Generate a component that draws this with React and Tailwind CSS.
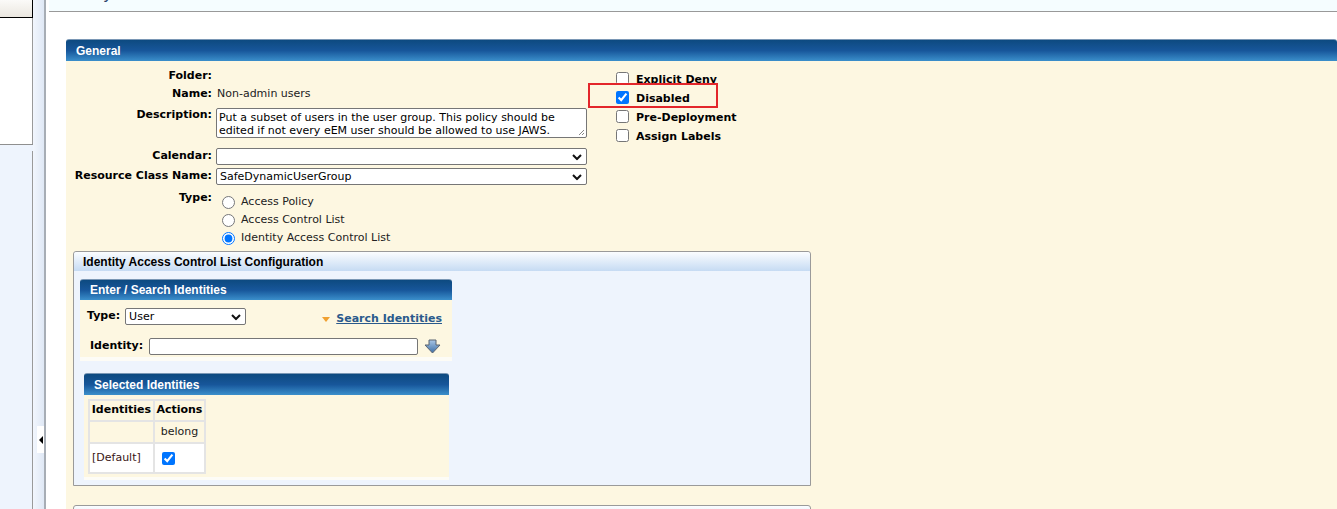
import React from 'react';

const verdana = { fontFamily: '"DejaVu Sans", Verdana, sans-serif' };

const Chevron = () => (
  <svg width="10" height="7" viewBox="0 0 10 7" className="pointer-events-none absolute right-[4px] top-1/2 -translate-y-1/2">
    <path d="M1 1.5 L5 5.5 L9 1.5" fill="none" stroke="#111" strokeWidth="2" />
  </svg>
);

const Select = ({ value, className }) => (
  <div className={`relative h-[17px] shrink-0 rounded-[2px] border border-[#767676] bg-white ${className}`}>
    <span className="block pl-[3px] text-[11px] leading-[15px] text-black">{value}</span>
    <Chevron />
  </div>
);

const BlueHeader = ({ title, className = '' }) => (
  <div className={`flex shrink-0 items-center rounded-tl-[3px] rounded-tr-[3px] border-t border-[#7a97b5] bg-gradient-to-b from-[#0d4a80] via-[#17569a] to-[#3b8fcb] ${className}`}>
    <span className="font-['Liberation_Sans',Arial,sans-serif] text-[12px] font-bold text-white">{title}</span>
  </div>
);

const Label = ({ children, className = '' }) => (
  <div className={`w-[138px] shrink-0 text-right text-[11px] font-bold text-black ${className}`}>{children}</div>
);

const SearchArrow = () => (
  <svg width="17" height="15" viewBox="0 0 17 15">
    <defs>
      <linearGradient id="ag" x1="0" y1="0" x2="0" y2="1">
        <stop offset="0" stopColor="#a9c6e6" />
        <stop offset="1" stopColor="#3d6fa6" />
      </linearGradient>
    </defs>
    <path d="M5 1 H12 V6 H16 L8.5 14 L1 6 H5 Z" fill="url(#ag)" stroke="#5b6470" strokeWidth="1" />
  </svg>
);

export default function App() {
  return (
    <div className="flex h-[509px] w-[1337px] overflow-hidden bg-white" style={verdana}>
      {/* left navigation */}
      <div className="flex w-[33px] shrink-0 flex-col">
        <div className="h-[18px] shrink-0 border-b border-r border-black bg-gradient-to-b from-[#fbfaf8] to-[#ebe7e0]" />
        <div className="h-[126px] shrink-0 border-r border-[#9a9a9a] bg-white" />
        <div className="h-px shrink-0 bg-[#8f8f8f]" />
        <div className="flex flex-1 bg-[#eef4fd]">
          <div className="flex-1" />
          <div className="mt-[6px] w-px bg-[#9a9a9a]" />
        </div>
      </div>

      {/* splitter */}
      <div className="flex w-[13px] shrink-0 flex-col border-r-2 border-[#a7adb5] bg-gradient-to-r from-[#f2f6fd] to-[#dfe8f5]">
        <div className="mt-[426px] ml-[4px] flex h-[27px] w-[7px] items-center justify-center bg-white">
          <div className="h-0 w-0 border-y-[4px] border-r-[4px] border-y-transparent border-r-black" />
        </div>
      </div>

      {/* main */}
      <div className="flex min-w-0 flex-1 flex-col overflow-hidden">
        <div className="ml-[3px] h-[12px] shrink-0 overflow-hidden border-b border-[#999] bg-[#f5fdff]">
          <div className="-mt-[15px] ml-[20px] font-['Liberation_Sans',Arial,sans-serif] text-[16px] leading-[18px] text-[#27406a]">Policy</div>
        </div>

        <div className="ml-[20px] mt-[27px] flex shrink-0 flex-col">
          <BlueHeader title="General" className="h-[22px] pl-[10px]" />

          <div className="flex h-[500px] shrink-0 flex-col bg-[#fdf7e1]">
            <div className="flex shrink-0">
              {/* form */}
              <div className="flex w-[521px] flex-col pl-[8px] pt-[6px]">
                <div className="flex h-[18px] items-center">
                  <Label>Folder:</Label>
                </div>
                <div className="flex h-[19px] items-center gap-[5px]">
                  <Label>Name:</Label>
                  <span className="text-[11px] text-[#222]">Non-admin users</span>
                </div>
                <div className="mt-[4px] flex gap-[4px]">
                  <Label className="leading-[13px]">Description:</Label>
                  <div className="relative h-[30px] w-[371px] rounded-[2px] border border-[#767676] bg-white pl-[2px] text-[11px] leading-[13px] text-black">
                    <div className="whitespace-nowrap pt-[2px]">Put a subset of users in the user group. This policy should be</div>
                    <div className="whitespace-nowrap">edited if not every eEM user should be allowed to use JAWS.</div>
                    <svg width="7" height="7" viewBox="0 0 7 7" className="absolute bottom-[1px] right-[1px]">
                      <path d="M6 1 L1 6 M6 4 L4 6" stroke="#888" strokeWidth="1" />
                    </svg>
                  </div>
                </div>
                <div className="mt-[10px] flex items-center gap-[4px]">
                  <Label>Calendar:</Label>
                  <Select value="" className="w-[371px]" />
                </div>
                <div className="mt-[3px] flex items-center gap-[4px]">
                  <Label>Resource Class Name:</Label>
                  <Select value="SafeDynamicUserGroup" className="w-[371px]" />
                </div>
                <div className="mt-[6px] flex gap-[4px]">
                  <Label className="leading-[13px]">Type:</Label>
                  <div className="flex flex-col pt-[2px]">
                    {[
                      ['Access Policy', false],
                      ['Access Control List', false],
                      ['Identity Access Control List', true],
                    ].map(([t, on]) => (
                      <label key={t} className="flex h-[18px] items-center gap-[6px] text-[11px] text-[#222]">
                        <input type="radio" name="type" defaultChecked={on} className="m-0 ml-[6px] h-[13px] w-[13px]" />
                        <span>{t}</span>
                      </label>
                    ))}
                  </div>
                </div>
              </div>

              {/* options */}
              <div className="relative ml-[29px] mt-[8px] flex flex-col">
                {[
                  ['Explicit Deny', false],
                  ['Disabled', true],
                  ['Pre-Deployment', false],
                  ['Assign Labels', false],
                ].map(([t, on]) => (
                  <label key={t} className="flex h-[19px] items-center gap-[7px] text-[11px] font-bold text-black">
                    <input type="checkbox" defaultChecked={on} className="m-0 h-[13px] w-[13px]" />
                    <span className="translate-y-[2px]">{t}</span>
                  </label>
                ))}
                <div className="pointer-events-none absolute left-[-28px] top-[14px] h-[25px] w-[130px] border-2 border-[#e3262b]" />
              </div>
            </div>

            {/* identity ACL configuration */}
            <div className="ml-[7px] mt-[4px] flex w-[738px] shrink-0 flex-col rounded-t-[3px] border border-[#9a9a9a] bg-[#eef4fd]">
              <div className="flex h-[19px] items-center rounded-t-[3px] bg-gradient-to-b from-[#fbfdff] to-[#c6dbf3] pl-[9px] font-['Liberation_Sans',Arial,sans-serif] text-[12px] font-bold text-black">
                Identity Access Control List Configuration
              </div>

              <div className="ml-[6px] mt-[8px] flex w-[372px] flex-col">
                <BlueHeader title="Enter / Search Identities" className="h-[21px] pl-[10px]" />
                <div className="flex flex-col border-b-[4px] border-[#fdfcf6] bg-[#fdf7e1] pb-[2px] pt-[8px]">
                  <div className="flex h-[17px] items-center">
                    <span className="ml-[7px] text-[11px] font-bold text-black">Type:</span>
                    <Select value="User" className="ml-[5px] w-[121px]" />
                    <div className="ml-auto mr-[10px] flex translate-y-[3px] items-center gap-[6px]">
                      <div className="h-0 w-0 border-x-[4px] border-t-[5px] border-x-transparent border-t-[#f0a030]" />
                      <span className="text-[11px] font-bold text-[#2a5a8c] underline">Search Identities</span>
                    </div>
                  </div>
                  <div className="mt-[13px] flex h-[17px] items-center">
                    <span className="ml-[10px] text-[11px] font-bold text-black">Identity:</span>
                    <div className="ml-[6px] h-[17px] w-[269px] rounded-[2px] border border-[#767676] bg-white" />
                    <div className="ml-[6px]">
                      <SearchArrow />
                    </div>
                  </div>
                </div>
              </div>

              <div className="ml-[10px] mt-[12px] flex w-[365px] flex-col">
                <BlueHeader title="Selected Identities" className="h-[22px] pl-[10px]" />
                <div className="flex flex-col border-b-[3px] border-[#fdfcf6] bg-[#fdf7e1] pb-[3px] pl-[4px] pt-[4px]">
                  <table className="w-[118px] border-separate border-spacing-[2px] bg-[#e4e4e4] text-[11px]">
                    <tbody>
                      <tr className="h-[19px]">
                        <th className="bg-[#fdf7e1] px-[1px] font-bold text-black">Identities</th>
                        <th className="bg-[#fdf7e1] px-[1px] font-bold text-black">Actions</th>
                      </tr>
                      <tr className="h-[20px]">
                        <td className="bg-[#fdf7e1]" />
                        <td className="bg-[#fdf7e1] text-center text-[#222]">belong</td>
                      </tr>
                      <tr className="h-[28px]">
                        <td className="bg-white pl-[2px] text-[#3a1515]">[Default]</td>
                        <td className="bg-white pl-[7px]">
                          <input type="checkbox" defaultChecked className="m-0 block h-[13px] w-[13px]" />
                        </td>
                      </tr>
                    </tbody>
                  </table>
                </div>
              </div>
              <div className="h-[5px]" />
            </div>

            <div className="ml-[7px] mt-[19px] h-[20px] w-[738px] shrink-0 rounded-t-[3px] border border-[#9a9a9a] bg-gradient-to-b from-[#fbfdff] to-[#c6dbf3]" />
          </div>
        </div>
      </div>
    </div>
  );
}
